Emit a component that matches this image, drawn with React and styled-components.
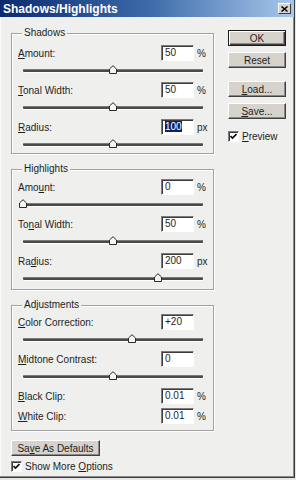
import React from 'react';
import styled, { createGlobalStyle, css } from 'styled-components';

const GlobalStyle = createGlobalStyle`
  html, body {
    margin: 0;
    padding: 0;
    background: #e6e6e4;
  }
  body {
    font-family: "Liberation Sans", Arial, sans-serif;
    font-size: 10px;
    color: #1e1e1e;
  }
  * {
    box-sizing: border-box;
  }
`;

const Window = styled.div`
  width: 295px;
  height: 478px;
  display: flex;
  flex-direction: column;
  background: #efefed;
  border-right: 1px solid #3c3c3c;
  border-bottom: 1px solid #3c3c3c;
  box-shadow: inset -1px -1px 0 #8c8c8c, inset 1px 1px 0 #fafafa;
`;

const TitleBar = styled.div`
  height: 17px;
  flex: none;
  display: flex;
  align-items: center;
  justify-content: space-between;
  padding: 0 3px 0 3px;
  background: linear-gradient(90deg, #0c2a70 0%, #3c6aa8 50%, #a8c8ec 100%);
  color: #fff;
  font-family: "Liberation Sans Narrow", "Liberation Sans", Arial, sans-serif;
  font-weight: bold;
  font-size: 12px;
`;

const CloseButton = styled.div`
  width: 13px;
  height: 11px;
  display: flex;
  align-items: center;
  justify-content: center;
  background: #d6d3cc;
  border: 1px solid;
  border-color: #fff #404040 #404040 #fff;
`;

const Body = styled.div`
  display: flex;
  gap: 14px;
  padding: 10px 0 0 11px;
`;

const LeftColumn = styled.div`
  width: 203px;
  display: flex;
  flex-direction: column;
`;

const Group = styled.fieldset`
  margin: 0 0 9px 0;
  padding: ${p => p.$top}px 0 ${p => p.$bottom}px 6px;
  border: 1px solid #a2a2a0;
  box-shadow: inset 1px 1px 0 #fff, 1px 1px 0 #fff;
  display: flex;
  flex-direction: column;
`;

const Legend = styled.legend`
  margin-left: 4px;
  padding: 0 2px;
  line-height: 12px;
  background: #efefed;
`;

const Row = styled.div`
  height: 16px;
  display: flex;
  align-items: center;
  margin-top: ${p => p.$gap}px;
`;

const Label = styled.span`
  flex: 1;
`;

const Field = styled.div`
  width: 33px;
  height: 16px;
  padding-left: 3px;
  line-height: 14px;
  background: #fff;
  border: 1px solid;
  border-color: #7c7c7c #fff #fff #7c7c7c;
  box-shadow: inset 1px 1px 0 #3c3c3c;
`;

const Selected = styled.span`
  background: #0a246a;
  color: #fff;
`;

const Unit = styled.span`
  width: 16px;
  margin-left: 3px;
`;

const SliderBox = styled.div`
  position: relative;
  height: 18px;
  margin: 0 10px 0 5px;
`;

const Track = styled.div`
  margin-top: 8px;
  height: 3px;
  border-radius: 1px;
  background: #4a4a4a;
  border-top: 1px solid #7a7a7a;
  box-shadow: 0 1px 0 #fff;
`;

const Thumb = styled.svg`
  position: absolute;
  top: 4px;
  width: 8px;
  height: 9px;
`;

const RightColumn = styled.div`
  width: 58px;
  display: flex;
  flex-direction: column;
  padding-top: 3px;
`;

const Button = styled.button`
  width: ${p => p.$width || 58}px;
  height: 16px;
  padding: 0;
  margin-top: ${p => p.$gap || 0}px;
  font: inherit;
  color: #1e1e1e;
  background: #d6d3cc;
  border: 1px solid;
  border-color: #fff #404040 #404040 #fff;
  box-shadow: inset -1px -1px 0 #888;
  ${p =>
    p.$default &&
    css`
      border-color: #1a1a1a;
      box-shadow: inset 1px 1px 0 #fff, inset -1px -1px 0 #404040, inset -2px -2px 0 #888;
    `}
`;

const CheckRow = styled.label`
  display: flex;
  align-items: center;
  gap: 3px;
  margin-top: ${p => p.$gap}px;
`;

const CheckBox = styled.span`
  width: 11px;
  height: 11px;
  display: flex;
  align-items: center;
  justify-content: center;
  background: #fff;
  border: 1px solid;
  border-color: #7c7c7c #fff #fff #7c7c7c;
  box-shadow: inset 1px 1px 0 #3c3c3c;
`;

const Key = ({ text, at }) => (
  <>
    {text.slice(0, at)}
    <u>{text[at]}</u>
    {text.slice(at + 1)}
  </>
);

const Slider = ({ pos }) => (
  <SliderBox>
    <Track />
    <Thumb viewBox="0 0 8 9" style={{ left: `calc(${pos * 100}% - 4px)` }}>
      <path d="M0.5 8.5V4L4 0.7L7.5 4V8.5Z" fill="#f6f6f4" stroke="#2a2a2a" strokeWidth="1" />
    </Thumb>
  </SliderBox>
);

const Check = () => (
  <CheckBox>
    <svg width="7" height="7" viewBox="0 0 7 7">
      <path d="M0.5 3L2.5 5L6.5 1" fill="none" stroke="#111" strokeWidth="1.7" />
    </svg>
  </CheckBox>
);

const groups = [
  {
    title: 'Shadows',
    top: 6,
    bottom: 0,
    rows: [
      { text: 'Amount:', at: 0, value: '50', unit: '%', pos: 0.5 },
      { text: 'Tonal Width:', at: 0, value: '50', unit: '%', pos: 0.5 },
      { text: 'Radius:', at: 0, value: '100', unit: 'px', pos: 0.5, selected: true },
    ],
  },
  {
    title: 'Highlights',
    top: 4,
    bottom: 2,
    rows: [
      { text: 'Amount:', at: 3, value: '0', unit: '%', pos: 0 },
      { text: 'Tonal Width:', at: 2, value: '50', unit: '%', pos: 0.5 },
      { text: 'Radius:', at: 2, value: '200', unit: 'px', pos: 0.75 },
    ],
  },
  {
    title: 'Adjustments',
    top: 3,
    bottom: 6,
    rows: [
      { text: 'Color Correction:', at: 0, value: '+20', unit: '', pos: 0.607 },
      { text: 'Midtone Contrast:', at: 0, value: '0', unit: '', pos: 0.5 },
      { text: 'Black Clip:', at: 0, value: '0.01', unit: '%' },
      { text: 'White Clip:', at: 0, value: '0.01', unit: '%', gap: 4 },
    ],
  },
];

export default function App() {
  return (
    <>
      <GlobalStyle />
      <Window>
        <TitleBar>
          <span>Shadows/Highlights</span>
          <CloseButton>
            <svg width="7" height="6" viewBox="0 0 7 6">
              <path d="M0.5 0.5L6.5 5.5M6.5 0.5L0.5 5.5" stroke="#000" strokeWidth="1.5" />
            </svg>
          </CloseButton>
        </TitleBar>
        <Body>
          <LeftColumn>
            {groups.map(g => (
              <Group key={g.title} $top={g.top} $bottom={g.bottom}>
                <Legend>{g.title}</Legend>
                {g.rows.map((r, i) => (
                  <React.Fragment key={r.text}>
                    <Row $gap={i === 0 ? 0 : r.gap || 3}>
                      <Label>
                        <Key text={r.text} at={r.at} />
                      </Label>
                      <Field>{r.selected ? <Selected>{r.value}</Selected> : r.value}</Field>
                      <Unit>{r.unit}</Unit>
                    </Row>
                    {r.pos !== undefined && <Slider pos={r.pos} />}
                  </React.Fragment>
                ))}
              </Group>
            ))}
            <Button $width={89} $gap={0}>
              <Key text="Save As Defaults" at={2} />
            </Button>
            <CheckRow $gap={5}>
              <Check />
              <span>
                Show More <Key text="Options" at={0} />
              </span>
            </CheckRow>
          </LeftColumn>
          <RightColumn>
            <Button $default>OK</Button>
            <Button $gap={6}>Reset</Button>
            <Button $gap={13}>
              <Key text="Load..." at={0} />
            </Button>
            <Button $gap={6}>
              <Key text="Save..." at={0} />
            </Button>
            <CheckRow $gap={12}>
              <Check />
              <span>
                <Key text="Preview" at={0} />
              </span>
            </CheckRow>
          </RightColumn>
        </Body>
      </Window>
    </>
  );
}
